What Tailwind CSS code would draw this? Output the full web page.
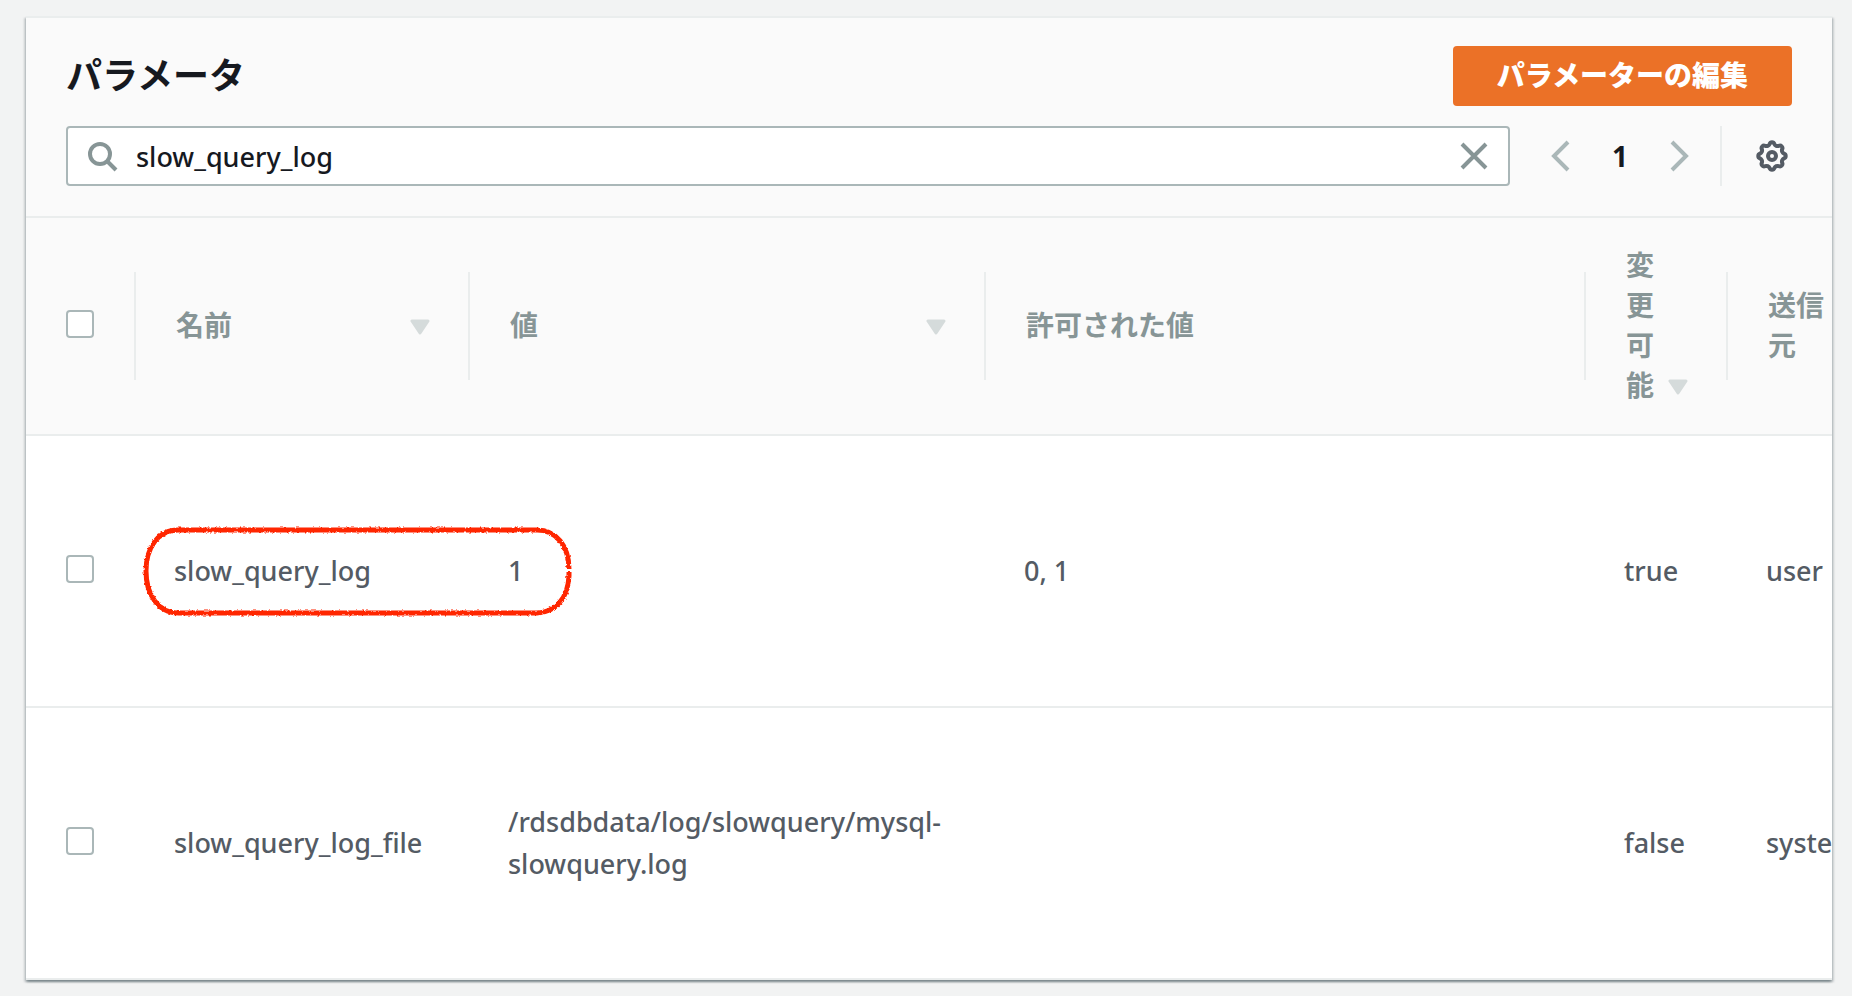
<!DOCTYPE html>
<html lang="ja">
<head>
    <meta charset="UTF-8">
    <meta name="viewport" content="width=device-width, initial-scale=1.0">
    <title>パラメータ</title>
    <script src="https://cdn.jsdelivr.net/npm/@tailwindcss/browser@4"></script>
</head>
<body class="bg-[#f2f3f3] font-['Noto_Sans','Noto_Sans_CJK_JP',sans-serif] text-[27px] leading-[42px] font-medium text-[#545b64]">
    <main class="pt-4 pb-4 pl-[26px] pr-5">
        <section class="border-y-2 border-[#eaeded] bg-white shadow-[0_2px_2px_0_rgba(0,28,36,0.3),2px_2px_2px_0_rgba(0,28,36,0.15),-2px_2px_2px_0_rgba(0,28,36,0.15)]">

            <!-- title, search and paging -->
            <header class="flex flex-col gap-5 border-b-2 border-[#eaeded] bg-[#fafafa] px-10 pt-7 pb-[30px]">
                <div class="flex items-center justify-between">
                    <h1 class="text-[36px] font-bold text-[#16191f]">パラメータ</h1>
                    <button type="button" class="h-[60px] rounded bg-[#eb7127] px-11 pb-0.5 text-[28px] font-black text-white">パラメーターの編集</button>
                </div>
                <div class="flex items-center">
                    <div class="flex h-[60px] flex-1 items-center rounded border-2 border-[#aab7b8] bg-white pr-[18px] pl-5">
                        <label for="search" aria-label="検索">
                            <svg class="size-8" viewBox="0 0 32 32" fill="none" stroke="#879596" stroke-width="4">
                                <circle cx="12" cy="14" r="10" />
                                <path d="M19 21l9 9" />
                            </svg>
                        </label>
                        <input id="search" type="text" value="slow_query_log" class="ml-4 min-w-0 flex-1 pt-0.5 text-[#16191f] outline-none">
                        <button type="button" aria-label="クリア">
                            <svg class="size-8" viewBox="0 0 32 32" fill="none" stroke="#879596" stroke-width="4">
                                <path d="M4 4l24 24M28 4L4 28" />
                            </svg>
                        </button>
                    </div>
                    <nav class="ml-[38px] flex items-center gap-10">
                        <button type="button" aria-label="前へ">
                            <svg class="h-8 w-6" viewBox="0 0 24 32" fill="none" stroke="#aab7b8" stroke-width="4">
                                <path d="M20 2L6 16l14 14" />
                            </svg>
                        </button>
                        <span class="text-[28px] font-bold text-[#16191f]">1</span>
                        <button type="button" aria-label="次へ">
                            <svg class="h-8 w-6" viewBox="0 0 24 32" fill="none" stroke="#aab7b8" stroke-width="4">
                                <path d="M4 2l14 14L4 30" />
                            </svg>
                        </button>
                    </nav>
                    <div class="ml-7 flex h-[60px] items-center border-l-2 border-[#eaeded] pl-[34px]">
                        <button type="button" aria-label="設定">
                            <svg class="mr-1 size-8" viewBox="0 0 32 32" fill="none" stroke="#545b64" stroke-width="4">
                                <path stroke-linejoin="round" d="M13.65 3.93A2.5 2.5 0 0 1 18.35 3.93A3.5 3.5 0 0 0 22.88 5.8A2.5 2.5 0 0 1 26.2 9.12A3.5 3.5 0 0 0 28.07 13.65A2.5 2.5 0 0 1 28.07 18.35A3.5 3.5 0 0 0 26.2 22.88A2.5 2.5 0 0 1 22.88 26.2A3.5 3.5 0 0 0 18.35 28.07A2.5 2.5 0 0 1 13.65 28.07A3.5 3.5 0 0 0 9.12 26.2A2.5 2.5 0 0 1 5.8 22.88A3.5 3.5 0 0 0 3.93 18.35A2.5 2.5 0 0 1 3.93 13.65A3.5 3.5 0 0 0 5.8 9.12A2.5 2.5 0 0 1 9.12 5.8A3.5 3.5 0 0 0 13.65 3.93Z" />
                                <circle cx="16" cy="16" r="4" />
                            </svg>
                        </button>
                    </div>
                </div>
            </header>

            <table class="w-full table-fixed border-collapse text-left">
                <colgroup>
                    <col class="w-[110px]">
                    <col class="w-[334px]">
                    <col class="w-[516px]">
                    <col>
                    <col class="w-[142px]">
                    <col class="w-[104px]">
                </colgroup>
                <thead class="bg-[#fafafa] text-[28px] leading-10 text-[#879596]">
                    <tr class="h-[217px] border-b-2 border-[#eaeded]">
                        <th class="p-0">
                            <div class="flex items-center justify-between pl-10">
                                <input type="checkbox" aria-label="すべて選択" class="mb-1 size-7 appearance-none rounded border-2 border-[#aab7b8] bg-white">
                                <div class="h-[108px] w-0.5 bg-[#eaeded]"></div>
                            </div>
                        </th>
                        <th class="p-0">
                            <div class="flex items-center pl-10">
                                <button type="button" class="mr-[38px] flex flex-1 items-end justify-between text-left font-bold">
                                    <span class="pb-0.5">名前</span>
                                    <svg class="h-10 w-5" viewBox="0 0 20 40" fill="#d5dbdb" stroke="#d5dbdb" stroke-width="3" stroke-linejoin="round"><path d="M2 14h16l-8 12z" /></svg>
                                </button>
                                <div class="h-[108px] w-0.5 bg-[#eaeded]"></div>
                            </div>
                        </th>
                        <th class="p-0">
                            <div class="flex items-center pl-10">
                                <button type="button" class="mr-[38px] flex flex-1 items-end justify-between text-left font-bold">
                                    <span class="pb-0.5">値</span>
                                    <svg class="h-10 w-5" viewBox="0 0 20 40" fill="#d5dbdb" stroke="#d5dbdb" stroke-width="3" stroke-linejoin="round"><path d="M2 14h16l-8 12z" /></svg>
                                </button>
                                <div class="h-[108px] w-0.5 bg-[#eaeded]"></div>
                            </div>
                        </th>
                        <th class="p-0">
                            <div class="flex items-center justify-between pl-10">
                                <span class="pb-0.5 font-bold">許可された値</span>
                                <div class="h-[108px] w-0.5 bg-[#eaeded]"></div>
                            </div>
                        </th>
                        <th class="p-0">
                            <div class="flex items-center pl-10">
                                <button type="button" class="mr-[38px] flex flex-1 items-end justify-between text-left font-bold">
                                    <span class="w-7 pb-0.5">変更可能</span>
                                    <svg class="h-10 w-5" viewBox="0 0 20 40" fill="#d5dbdb" stroke="#d5dbdb" stroke-width="3" stroke-linejoin="round"><path d="M2 14h16l-8 12z" /></svg>
                                </button>
                                <div class="h-[108px] w-0.5 bg-[#eaeded]"></div>
                            </div>
                        </th>
                        <th class="p-0 pb-0.5 pl-10 font-bold">送信元</th>
                    </tr>
                </thead>
                <tbody>
                    <tr class="h-[272px] border-b-2 border-[#eaeded]">
                        <td class="pb-1 pl-10">
                            <input type="checkbox" aria-label="slow_query_log" class="block size-7 appearance-none rounded border-2 border-[#aab7b8] bg-white">
                        </td>
                        <td class="relative pl-[38px]">
                            slow_query_log
                            <!-- hand-drawn marker around name and value -->
                            <svg class="pointer-events-none absolute top-[90px] left-1.5 h-[92px] w-[430px]" viewBox="0 0 430 92" fill="none">
                                <filter id="rough" x="-5%" y="-10%" width="110%" height="120%">
                                    <feTurbulence type="fractalNoise" baseFrequency="0.4" numOctaves="2" seed="4" />
                                    <feDisplacementMap in="SourceGraphic" scale="3" xChannelSelector="R" yChannelSelector="G" />
                                </filter>
                                <path filter="url(#rough)" stroke="#ff2600" stroke-width="5" d="M427 46V50C426 72 414 86 395 87H36C16 87 4 68 4 45S16 4 36 4H395C414 4 427 20 427 43" />
                            </svg>
                        </td>
                        <td class="pl-[38px]">1</td>
                        <td class="pl-[38px]">0, 1</td>
                        <td class="pl-[38px]">true</td>
                        <td class="overflow-hidden pl-[38px]">user</td>
                    </tr>
                    <tr class="h-[271px]">
                        <td class="pb-1 pl-10">
                            <input type="checkbox" aria-label="slow_query_log_file" class="block size-7 appearance-none rounded border-2 border-[#aab7b8] bg-white">
                        </td>
                        <td class="pl-[38px]">slow_query_log_file</td>
                        <td class="pr-9 pl-[38px]">/rdsdbdata/log/slowquery/mysql-slowquery.log</td>
                        <td class="pl-[38px]"></td>
                        <td class="pl-[38px]">false</td>
                        <td class="overflow-hidden pl-[38px]">system</td>
                    </tr>
                </tbody>
            </table>
        </section>
    </main>
</body>
</html>
